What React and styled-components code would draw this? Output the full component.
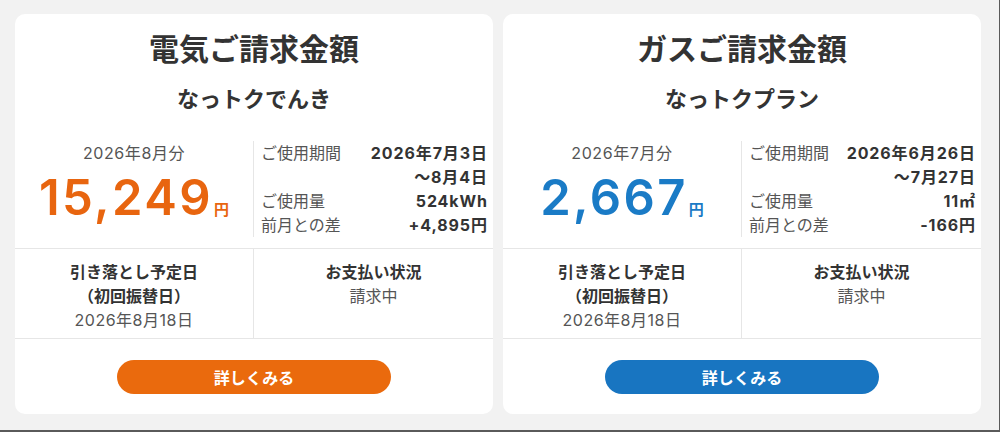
import React from "react";
import styled, { createGlobalStyle } from "styled-components";

const Global = createGlobalStyle`
  html, body { margin: 0; padding: 0; background: #f2f2f2; }
  body { font-family: "Inter", "Noto Sans CJK JP", sans-serif; color: #333; }
  * { box-sizing: border-box; }
`;

const Page = styled.div`
  width: 1000px;
  height: 432px;
  padding: 14px 0 0 15px;
  display: grid;
  grid-template-columns: repeat(2, 478px);
  column-gap: 10px;
  align-items: start;
  border-right: 1px solid #5a5a5a;
  border-bottom: 2px solid #5a5a5a;
`;

const Card = styled.section`
  background: #fff;
  border-radius: 10px;
  height: 400px;
  display: flex;
  flex-direction: column;
  padding-top: 13px;
`;

const Title = styled.h2`
  margin: 0;
  font-family: "Noto Sans CJK JP", sans-serif;
  font-size: 30px;
  line-height: 40px;
  font-weight: 700;
  color: #333;
  text-align: center;
`;

const Subtitle = styled.h3`
  margin: 15px 0 0;
  font-family: "Noto Sans CJK JP", sans-serif;
  font-size: 22px;
  line-height: 30px;
  font-weight: 700;
  color: #333;
  text-align: center;
`;

const Summary = styled.div`
  margin-top: 29px;
  display: grid;
  grid-template-columns: 238px 1fr;
  padding-bottom: 11px;
  border-bottom: 1px solid #e6e6e6;
`;

const AmountCol = styled.div`
  text-align: center;
`;

const Month = styled.div`
  font-size: 16px;
  line-height: 24px;
  letter-spacing: 0.6px;
  color: #555;
`;

const Amount = styled.div`
  margin-top: 8px;
  font-size: 49px;
  line-height: 50px;
  font-weight: 600;
  letter-spacing: 2.4px;
  color: ${(p) => p.$color};
`;

const Yen = styled.span`
  font-size: 15px;
  font-weight: 700;
  letter-spacing: 0;
  margin-left: 1px;
`;

const Details = styled.dl`
  margin: 0;
  border-left: 1px solid #e6e6e6;
  padding: 0 6px 0 7px;
  display: grid;
  grid-template-columns: auto 1fr;
  font-size: 16px;
  line-height: 24px;
`;

const Label = styled.dt`
  color: #555;
`;

const Value = styled.dd`
  margin: 0;
  text-align: right;
  font-weight: 700;
  letter-spacing: 0.9px;
  margin-right: -0.9px;
  color: #333;
`;

const Schedule = styled.div`
  display: grid;
  grid-template-columns: 238px 1fr;
  border-bottom: 1px solid #e6e6e6;
`;

const Cell = styled.div`
  padding: 11px 0 6px;
  text-align: center;
  font-size: 16px;
  line-height: 24px;
  color: #555;
  ${(p) => p.$divider && "border-left: 1px solid #e6e6e6;"}
`;

const CellHead = styled.div`
  font-weight: 700;
  color: #333;
`;

const CellDate = styled.div`
  letter-spacing: 0.5px;
`;

const Actions = styled.div`
  flex: 1;
  display: flex;
  align-items: center;
  justify-content: center;
`;

const MoreButton = styled.button`
  width: 274px;
  height: 34px;
  border: none;
  border-radius: 17px;
  background: ${(p) => p.$color};
  color: #fff;
  font-family: "Noto Sans CJK JP", sans-serif;
  font-size: 16px;
  font-weight: 700;
  cursor: pointer;
`;

const cards = [
  {
    title: "電気ご請求金額",
    plan: "なっトクでんき",
    month: "2026年8月分",
    amount: "15,249",
    color: "#e8650f",
    button: "#ea6a0d",
    rows: [
      ["ご使用期間", "2026年7月3日"],
      ["", "〜8月4日"],
      ["ご使用量", "524kWh"],
      ["前月との差", "+4,895円"],
    ],
  },
  {
    title: "ガスご請求金額",
    plan: "なっトクプラン",
    month: "2026年7月分",
    amount: "2,667",
    color: "#1a7bc6",
    button: "#1875c1",
    rows: [
      ["ご使用期間", "2026年6月26日"],
      ["", "〜7月27日"],
      ["ご使用量", "11㎡"],
      ["前月との差", "-166円"],
    ],
  },
];

function BillCard({ c }) {
  return (
    <Card>
      <Title>{c.title}</Title>
      <Subtitle>{c.plan}</Subtitle>
      <Summary>
        <AmountCol>
          <Month>{c.month}</Month>
          <Amount $color={c.color}>
            {c.amount}
            <Yen>円</Yen>
          </Amount>
        </AmountCol>
        <Details>
          {c.rows.map(([l, v], i) => (
            <React.Fragment key={i}>
              <Label>{l}</Label>
              <Value>{v}</Value>
            </React.Fragment>
          ))}
        </Details>
      </Summary>
      <Schedule>
        <Cell>
          <CellHead>引き落とし予定日</CellHead>
          <CellHead>（初回振替日）</CellHead>
          <CellDate>2026年8月18日</CellDate>
        </Cell>
        <Cell $divider>
          <CellHead>お支払い状況</CellHead>
          <div>請求中</div>
        </Cell>
      </Schedule>
      <Actions>
        <MoreButton $color={c.button}>詳しくみる</MoreButton>
      </Actions>
    </Card>
  );
}

export default function App() {
  return (
    <>
      <Global />
      <Page>
        {cards.map((c) => (
          <BillCard key={c.title} c={c} />
        ))}
      </Page>
    </>
  );
}
